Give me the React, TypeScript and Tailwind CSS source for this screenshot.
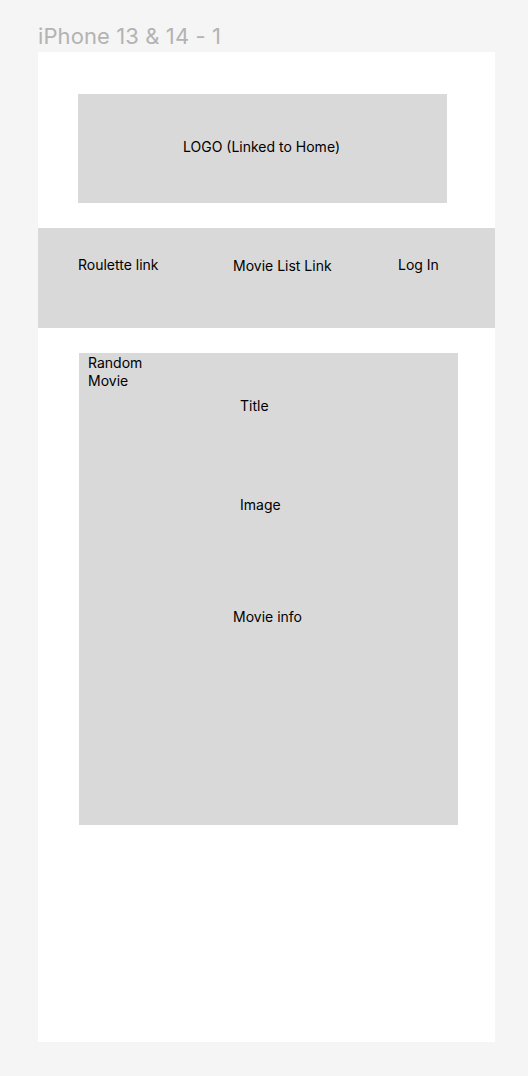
const font = { fontFamily: "Inter, 'Noto Sans', sans-serif" };

const App = () => {
    return (
        <div className="min-h-screen bg-[#f5f5f5] pb-[34px]" style={font}>
            {/* frame label */}
            <div className="h-[52px] pl-[38px] pt-[23px]">
                <p className="text-[22px] leading-[26px] tracking-[0.1px] text-[#b3b3b3]">iPhone 13 &amp; 14 - 1</p>
            </div>

            {/* phone frame */}
            <div className="ml-[38px] w-[457px] h-[990px] bg-white flex flex-col text-[14px] text-black">
                <div className="mt-[42px] ml-[40px] w-[369px] h-[109px] bg-[#d9d9d9] flex items-center justify-center">
                    <span className="ml-[-2px] mt-[-4px]">LOGO (Linked to Home)</span>
                </div>

                <nav className="mt-[25px] h-[100px] bg-[#d9d9d9] flex items-start pt-[28px]">
                    <a className="ml-[40px] w-[155px] leading-[18px]">Roulette link</a>
                    <a className="w-[165px] mt-[1px] leading-[18px]">Movie List Link</a>
                    <a className="leading-[18px]">Log In</a>
                </nav>

                <section className="mt-[25px] ml-[41px] w-[379px] h-[472px] bg-[#d9d9d9] flex flex-col leading-[18px]">
                    <p className="ml-[9px] mt-[1px] w-[60px]">Random Movie</p>
                    <p className="ml-[161px] mt-[7px]">Title</p>
                    <p className="ml-[161px] mt-[81px]">Image</p>
                    <p className="ml-[154px] mt-[94px]">Movie info</p>
                </section>
            </div>
        </div>
    );
};

export default App;
